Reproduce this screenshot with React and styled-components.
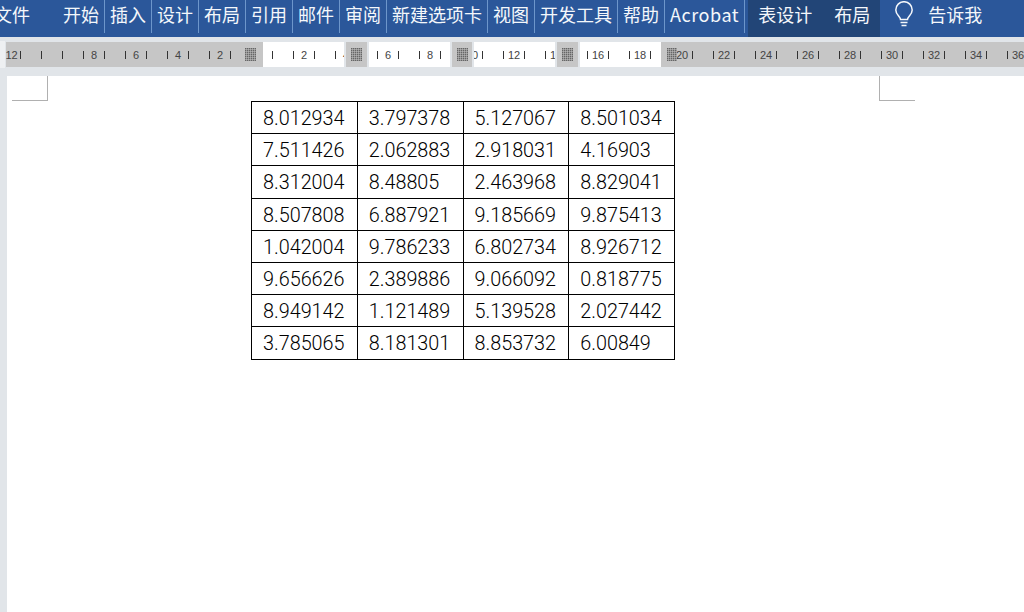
import React from 'react'
import styled, { createGlobalStyle } from 'styled-components'

const GlobalStyle = createGlobalStyle`
  html, body {
    margin: 0;
    padding: 0;
    background: #fff;
    overflow: hidden;
  }
`

const Window = styled.div`
  width: 1024px;
  height: 612px;
  display: flex;
  flex-direction: column;
  overflow: hidden;
  background: #e1e5e9;
  font-family: "Noto Sans CJK SC", "Noto Sans", sans-serif;
`

const Ribbon = styled.div`
  flex: none;
  height: 37px;
  display: flex;
  background: #2b579a;
  color: #f4f7fb;
  font-size: 18px;
  line-height: 28px;
`

const FileTab = styled.div`
  width: 64px;
  margin-left: -6px;
`

const Tab = styled.div`
  height: 33px;
  padding: 0 5px;
  border-right: 1px solid #6d96cb;
  white-space: nowrap;
  letter-spacing: ${({ $latin }) => ($latin ? '0.55px' : '0')};
`

const ContextGroup = styled.div`
  display: flex;
  gap: 22px;
  margin-left: 3px;
  padding: 0 10px;
  background: #224577;
`

const TellMe = styled.div`
  display: flex;
  gap: 14px;
  margin-left: 14px;
`

const Bulb = styled.svg`
  width: 20px;
  height: 26px;
  margin-top: 1px;
`

const RulerBand = styled.div`
  flex: none;
  height: 39px;
  display: flex;
  padding-top: 5px;
  box-sizing: border-box;
`

const SideTab = styled.div`
  flex: none;
  width: 5px;
  height: 27px;
  margin: -1px 1px 0 0;
  background: #eef0f2;
`

const Ruler = styled.div`
  position: relative;
  flex: 1;
  height: 25px;
  display: flex;
  overflow: hidden;
  background: #c6c6c6;
`

const MarginArea = styled.div`
  display: flex;
  align-items: center;
  justify-content: flex-end;
  flex: none;
  width: 255px;
  padding-right: 5px;
  box-sizing: border-box;
`

const Pane = styled.div`
  flex: none;
  width: 81px;
  margin: 0 2px;
  background: #fff;
`

const Gutter = styled.div`
  position: relative;
  z-index: 2;
  display: flex;
  align-items: center;
  justify-content: center;
  flex: none;
  width: ${({ $width }) => $width}px;
  background: #c6c6c6;
  box-shadow: -2px 0 0 #e1e5e9, 2px 0 0 #e1e5e9;
`

const TailArea = styled.div`
  display: flex;
  align-items: center;
  flex: 1;
  padding-left: 4px;
`

const Hatch = styled.div`
  position: relative;
  z-index: 2;
  flex: none;
  width: ${({ $width }) => $width || 11}px;
  height: 13px;
  background-color: #666;
  background-image:
    repeating-linear-gradient(90deg, transparent 0 1px, rgba(198, 198, 198, 0.5) 1px 2px),
    repeating-linear-gradient(0deg, transparent 0 1px, rgba(198, 198, 198, 0.5) 1px 2px);
`

const Ticks = styled.div`
  position: absolute;
  z-index: 1;
  top: 9px;
  left: -7px;
  display: flex;
`

const Tick = styled.div`
  flex: none;
  width: 20px;
  height: 8px;
  border-left: 1px solid #333;
  color: #444;
  font-family: "Liberation Sans", sans-serif;
  font-size: 11px;
  line-height: 9px;
  text-align: center;

  &:first-child {
    border-left-color: transparent;
    text-indent: 3px;
  }
`

const Page = styled.div`
  flex: 1;
  margin-left: 7px;
  background: #fff;
`

const CropRow = styled.div`
  display: flex;
  justify-content: space-between;
  width: 903px;
  margin-left: 5px;
`

const CropMark = styled.div`
  box-sizing: content-box;
  width: 35px;
  height: 24px;
  border-bottom: 1px solid #b0b0b0;
  border-left: ${({ $side }) => ($side === 'right' ? '1px solid #b0b0b0' : 'none')};
  border-right: ${({ $side }) => ($side === 'left' ? '1px solid #b0b0b0' : 'none')};
`

const DataTable = styled.table`
  width: 424px;
  margin-left: 244px;
  border-collapse: collapse;
  table-layout: fixed;
  font-family: Roboto, "Liberation Sans", sans-serif;
  font-size: 19.8px;
  font-weight: 300;
  color: #000;
`

const Cell = styled.td`
  height: ${({ $tall }) => ($tall ? 30 : 29)}px;
  padding: 2px 0 0 11px;
  border: 1px solid #000;
  line-height: 28px;
`

const mainTabs = ['开始', '插入', '设计', '布局', '引用', '邮件', '审阅', '新建选项卡', '视图', '开发工具', '帮助', 'Acrobat']

const tickLabels = ['12', '', '8', '6', '4', '2', '', '2', '4', '6', '8', '10', '12', '14', '16', '18', '20', '22', '24', '26', '28', '30', '32', '34', '36']

const rows = [
  ['8.012934', '3.797378', '5.127067', '8.501034'],
  ['7.511426', '2.062883', '2.918031', '4.16903'],
  ['8.312004', '8.48805', '2.463968', '8.829041'],
  ['8.507808', '6.887921', '9.185669', '9.875413'],
  ['1.042004', '9.786233', '6.802734', '8.926712'],
  ['9.656626', '2.389886', '9.066092', '0.818775'],
  ['8.949142', '1.121489', '5.139528', '2.027442'],
  ['3.785065', '8.181301', '8.853732', '6.00849'],
]

const App = () => {
  return (
    <Window>
      <GlobalStyle />
      <Ribbon>
        <FileTab>文件</FileTab>
        {mainTabs.map((name) => <Tab key={name} $latin={name === 'Acrobat'}>{name}</Tab>)}
        <ContextGroup>
          <span>表设计</span>
          <span>布局</span>
        </ContextGroup>
        <TellMe>
          <Bulb viewBox="0 0 20 26" fill="none" stroke="#f4f7fb" strokeWidth="1.5">
            <path d="M6.5 18.5c0-3-4.7-4.6-4.7-9.6a8.2 8.2 0 0 1 16.4 0c0 5-4.7 6.6-4.7 9.6z" />
            <path d="M6.5 21.5h7M7.5 24.5h5" />
          </Bulb>
          <span>告诉我</span>
        </TellMe>
      </Ribbon>
      <RulerBand>
        <SideTab />
        <Ruler>
          <MarginArea><Hatch /></MarginArea>
          <Pane />
          <Gutter $width={21}><Hatch /></Gutter>
          <Pane />
          <Gutter $width={20}><Hatch /></Gutter>
          <Pane />
          <Gutter $width={21}><Hatch /></Gutter>
          <Pane />
          <TailArea><Hatch $width={10} /></TailArea>
          <Ticks>
            {tickLabels.map((label, i) => (
              <React.Fragment key={i}>
                <Tick>{label}</Tick>
                <Tick />
              </React.Fragment>
            ))}
          </Ticks>
        </Ruler>
      </RulerBand>
      <Page>
        <CropRow>
          <CropMark $side="left" />
          <CropMark $side="right" />
        </CropRow>
        <DataTable>
          <tbody>
            {rows.map((row, r) => (
              <tr key={r}>
                {row.map((value, c) => <Cell key={c} $tall={r === 2 || r === 7}>{value}</Cell>)}
              </tr>
            ))}
          </tbody>
        </DataTable>
      </Page>
    </Window>
  )
}

export default App
